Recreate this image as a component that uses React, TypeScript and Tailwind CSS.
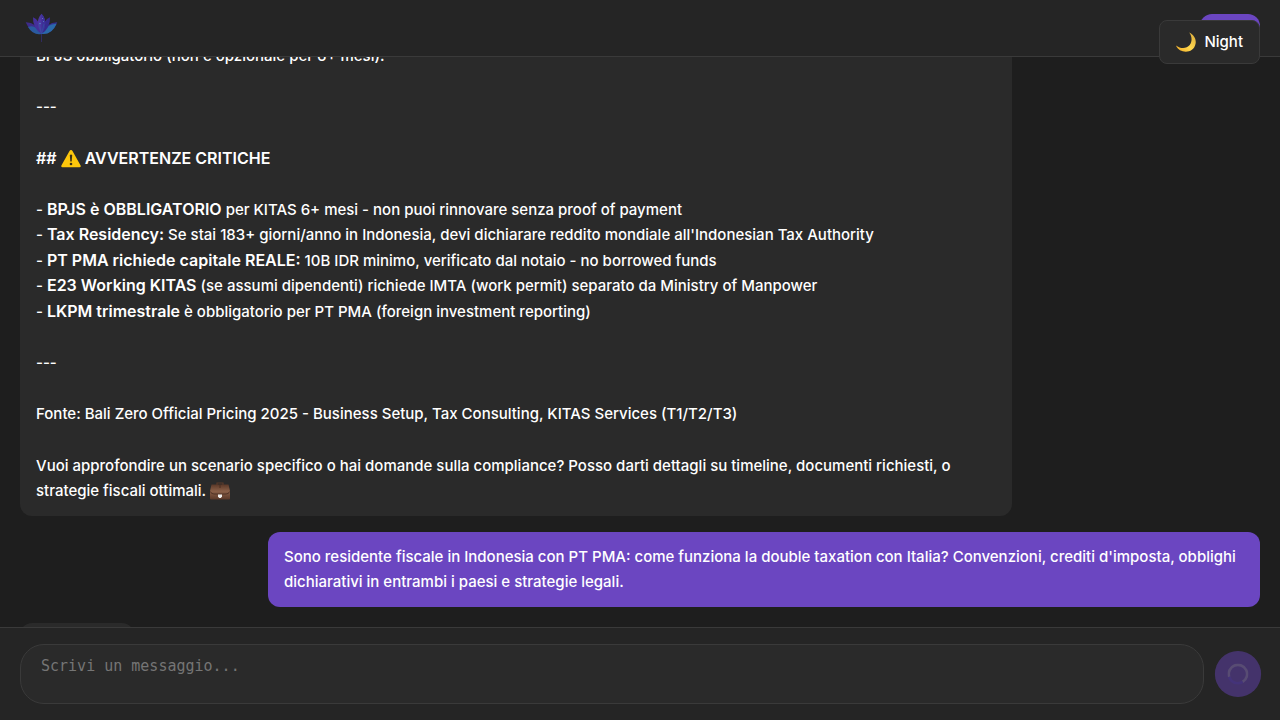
import type { ReactNode } from "react";

function LotusLogo() {
  return (
    <svg viewBox="0 0 36 36" className="size-9" aria-hidden="true">
      <path d="M17.500 23V32" stroke="#322c68" strokeWidth="0.900" />
      <path d="M1.700 12.300Q12 12 17.500 24Q7 25 1.700 12.300Z" fill="#3d2b8a" />
      <path d="M33.300 12.300Q23 12 17.500 24Q28 25 33.300 12.300Z" fill="#352f8f" />
      <path d="M4 17Q11 13.500 17.500 24Q9 25.500 4 17Z" fill="#2a5a9f" />
      <path d="M32.600 13.800Q23 13.500 17.500 24Q28 25 32.600 13.800Z" fill="#2a69a9" />
      <path d="M9 7.300Q17 10 17.500 24Q8.500 18 9 7.300Z" fill="#45309a" />
      <path d="M26 7.300Q18 10 17.500 24Q26.500 18 26 7.300Z" fill="#352a8e" />
      <path d="M17.500 3.700Q25 12 17.500 24Q10 12 17.500 3.700Z" fill="#4d37a0" />
      <path d="M17.500 3.700Q25 12 17.500 24Z" fill="#3d3098" />
      <path d="M15 14L17.500 24L20 14" fill="none" stroke="#2f5aa5" strokeWidth="0.600" />
      <circle cx="16" cy="13.500" r="0.700" fill="#4f93cf" />
      <circle cx="18.500" cy="8.500" r="0.500" fill="#7e77cf" />
      <circle cx="19.500" cy="11.500" r="0.500" fill="#5d80c8" />
    </svg>
  );
}

function MoonIcon() {
  return (
    <svg viewBox="0 0 20 20" className="size-5" aria-hidden="true">
      <defs>
        <linearGradient id="moon" x1="0" y1="1" x2="1" y2="0">
          <stop offset="0" stopColor="#f2a71f" />
          <stop offset="0.45" stopColor="#ffd84f" />
          <stop offset="1" stopColor="#d9a93a" />
        </linearGradient>
      </defs>
      <path d="M13.200 0.500C18 2.500 20.600 7.500 19.500 12C17.500 22 3.500 22 0 13.500C4.500 17 10.500 17 13.700 13C16.500 9.500 16 4 13.200 0.500Z" fill="url(#moon)" />
    </svg>
  );
}

function WarningIcon() {
  return (
    <svg viewBox="0 0 20 20" className="inline-block size-5 align-middle" aria-hidden="true">
      <path d="M10 1Q11 1 11.500 2L19.600 16.500Q20.200 18.300 18.500 18.300H1.500Q-0.200 18.300 0.400 16.500L8.500 2Q9 1 10 1Z" fill="#fdc70c" />
      <path d="M8.800 6Q10 5.100 11.200 6L10.700 12.500H9.300Z" fill="#3a3017" />
      <circle cx="10" cy="15" r="1.300" fill="#3a3017" />
    </svg>
  );
}

function BriefcaseIcon() {
  return (
    <svg viewBox="0 0 20 20" className="inline-block size-5 align-middle" aria-hidden="true">
      <defs>
        <linearGradient id="leather" x1="0" y1="0" x2="0" y2="1">
          <stop offset="0" stopColor="#5a3828" />
          <stop offset="0.450" stopColor="#8b6048" />
          <stop offset="1" stopColor="#5a3828" />
        </linearGradient>
      </defs>
      <path d="M7 3.500V1H13V3.500" fill="none" stroke="#5b3a2a" strokeWidth="1.200" />
      <path d="M1.500 2.500H18.500L20 9V16.500Q20 17.500 19 17.500H1Q0 17.500 0 16.500V9Z" fill="url(#leather)" />
      <path d="M0.500 9.500Q1 12 4 12H16Q19 12 19.500 9.500" fill="none" stroke="#452b1f" strokeWidth="0.800" />
      <path d="M10 2.500V6" stroke="#4a2e21" strokeWidth="1" />
      <path d="M8 12.500H12V14.500L10.800 16H9.200L8 14.500Z" fill="#f0eeec" />
    </svg>
  );
}

function Spinner() {
  return (
    <svg viewBox="0 0 20 20" className="size-5" fill="none" strokeWidth="2.500" aria-hidden="true">
      <path d="M1.600 12.700A8.750 8.750 0 1 1 14.400 17.600" stroke="#ffffff" strokeOpacity="0.300" />
      <path d="M14.400 17.600A8.750 8.750 0 0 1 1.600 12.700" stroke="#6b46e0" />
    </svg>
  );
}

function Message({ own = false, children }: { own?: boolean; children: ReactNode }) {
  return (
    <article
      className={
        own
          ? "max-w-[80%] self-end rounded-xl bg-[#6b46c1] px-4 py-3"
          : "max-w-[80%] self-start rounded-xl bg-[#2a2a2a] px-4 py-3"
      }
    >
      <div className="text-[15px] font-medium">{children}</div>
    </article>
  );
}

function Strong({ children }: { children: ReactNode }) {
  return <strong className="text-[16px] font-semibold">{children}</strong>;
}

const Gap = () => <br />;

export default function App() {
  return (
    <div className="flex h-screen flex-col bg-[#1e1e1e] font-['Inter',sans-serif] text-base leading-[1.6em] text-white">
      <header className="flex h-[57px] shrink-0 items-center justify-between border-b border-[#3a3a3a] bg-[#252525] px-6">
        <LotusLogo />
        <button type="button" aria-label="Account" className="-mr-1 h-7 w-[60px] rounded-xl bg-[#6b46c1]" />
      </header>

      <button
        type="button"
        className="fixed top-5 right-5 flex h-11 items-center gap-2 rounded-lg border border-[#3a3a3a] bg-[#2a2a2a] px-4 text-[15px] font-medium"
      >
        <MoonIcon />
        Night
      </button>

      <main className="flex min-h-0 flex-1 flex-col justify-end overflow-hidden px-5">
        <div className="-mb-10 flex flex-col gap-4">
          <Message>
            <p>BPJS obbligatorio (non è opzionale per 6+ mesi).</p>
            <Gap />
            <p>---</p>
            <Gap />
            <h2 className="text-[16px] font-semibold">
              ## <WarningIcon /> AVVERTENZE CRITICHE
            </h2>
            <Gap />
            <p>- <Strong>BPJS è OBBLIGATORIO</Strong> per KITAS 6+ mesi - non puoi rinnovare senza proof of payment</p>
            <p>- <Strong>Tax Residency:</Strong> Se stai 183+ giorni/anno in Indonesia, devi dichiarare reddito mondiale all'Indonesian Tax Authority</p>
            <p>- <Strong>PT PMA richiede capitale REALE:</Strong> 10B IDR minimo, verificato dal notaio - no borrowed funds</p>
            <p>- <Strong>E23 Working KITAS</Strong> (se assumi dipendenti) richiede IMTA (work permit) separato da Ministry of Manpower</p>
            <p>- <Strong>LKPM trimestrale</Strong> è obbligatorio per PT PMA (foreign investment reporting)</p>
            <Gap />
            <p>---</p>
            <Gap />
            <p>Fonte: Bali Zero Official Pricing 2025 - Business Setup, Tax Consulting, KITAS Services (T1/T2/T3)</p>
            <Gap />
            <p>
              Vuoi approfondire un scenario specifico o hai domande sulla compliance? Posso darti dettagli su timeline, documenti richiesti, o strategie fiscali ottimali. <BriefcaseIcon />
            </p>
          </Message>
          <Message own>
            <p>Sono residente fiscale in Indonesia con PT PMA: come funziona la double taxation con Italia? Convenzioni, crediti d'imposta, obblighi dichiarativi in entrambi i paesi e strategie legali.</p>
          </Message>
          <div className="h-11 w-[114px] rounded-xl bg-[#2a2a2a]" />
        </div>
      </main>

      <form className="flex shrink-0 items-center gap-3 border-t border-[#3a3a3a] bg-[#252525] px-5 py-4">
        <textarea
          aria-label="Messaggio"
          placeholder="Scrivi un messaggio..."
          className="block h-[60px] flex-1 resize-none rounded-3xl border border-[#3a3a3a] bg-[#2a2a2a] px-5 py-3 font-['DejaVu_Sans_Mono',monospace] text-[15px] leading-[18px] outline-none placeholder:text-[#757575]"
        />
        <button
          type="button"
          aria-label="Invio in corso"
          className="flex size-11 scale-105 items-center justify-center rounded-full bg-[#6b46c1] opacity-45"
        >
          <Spinner />
        </button>
      </form>
    </div>
  );
}
